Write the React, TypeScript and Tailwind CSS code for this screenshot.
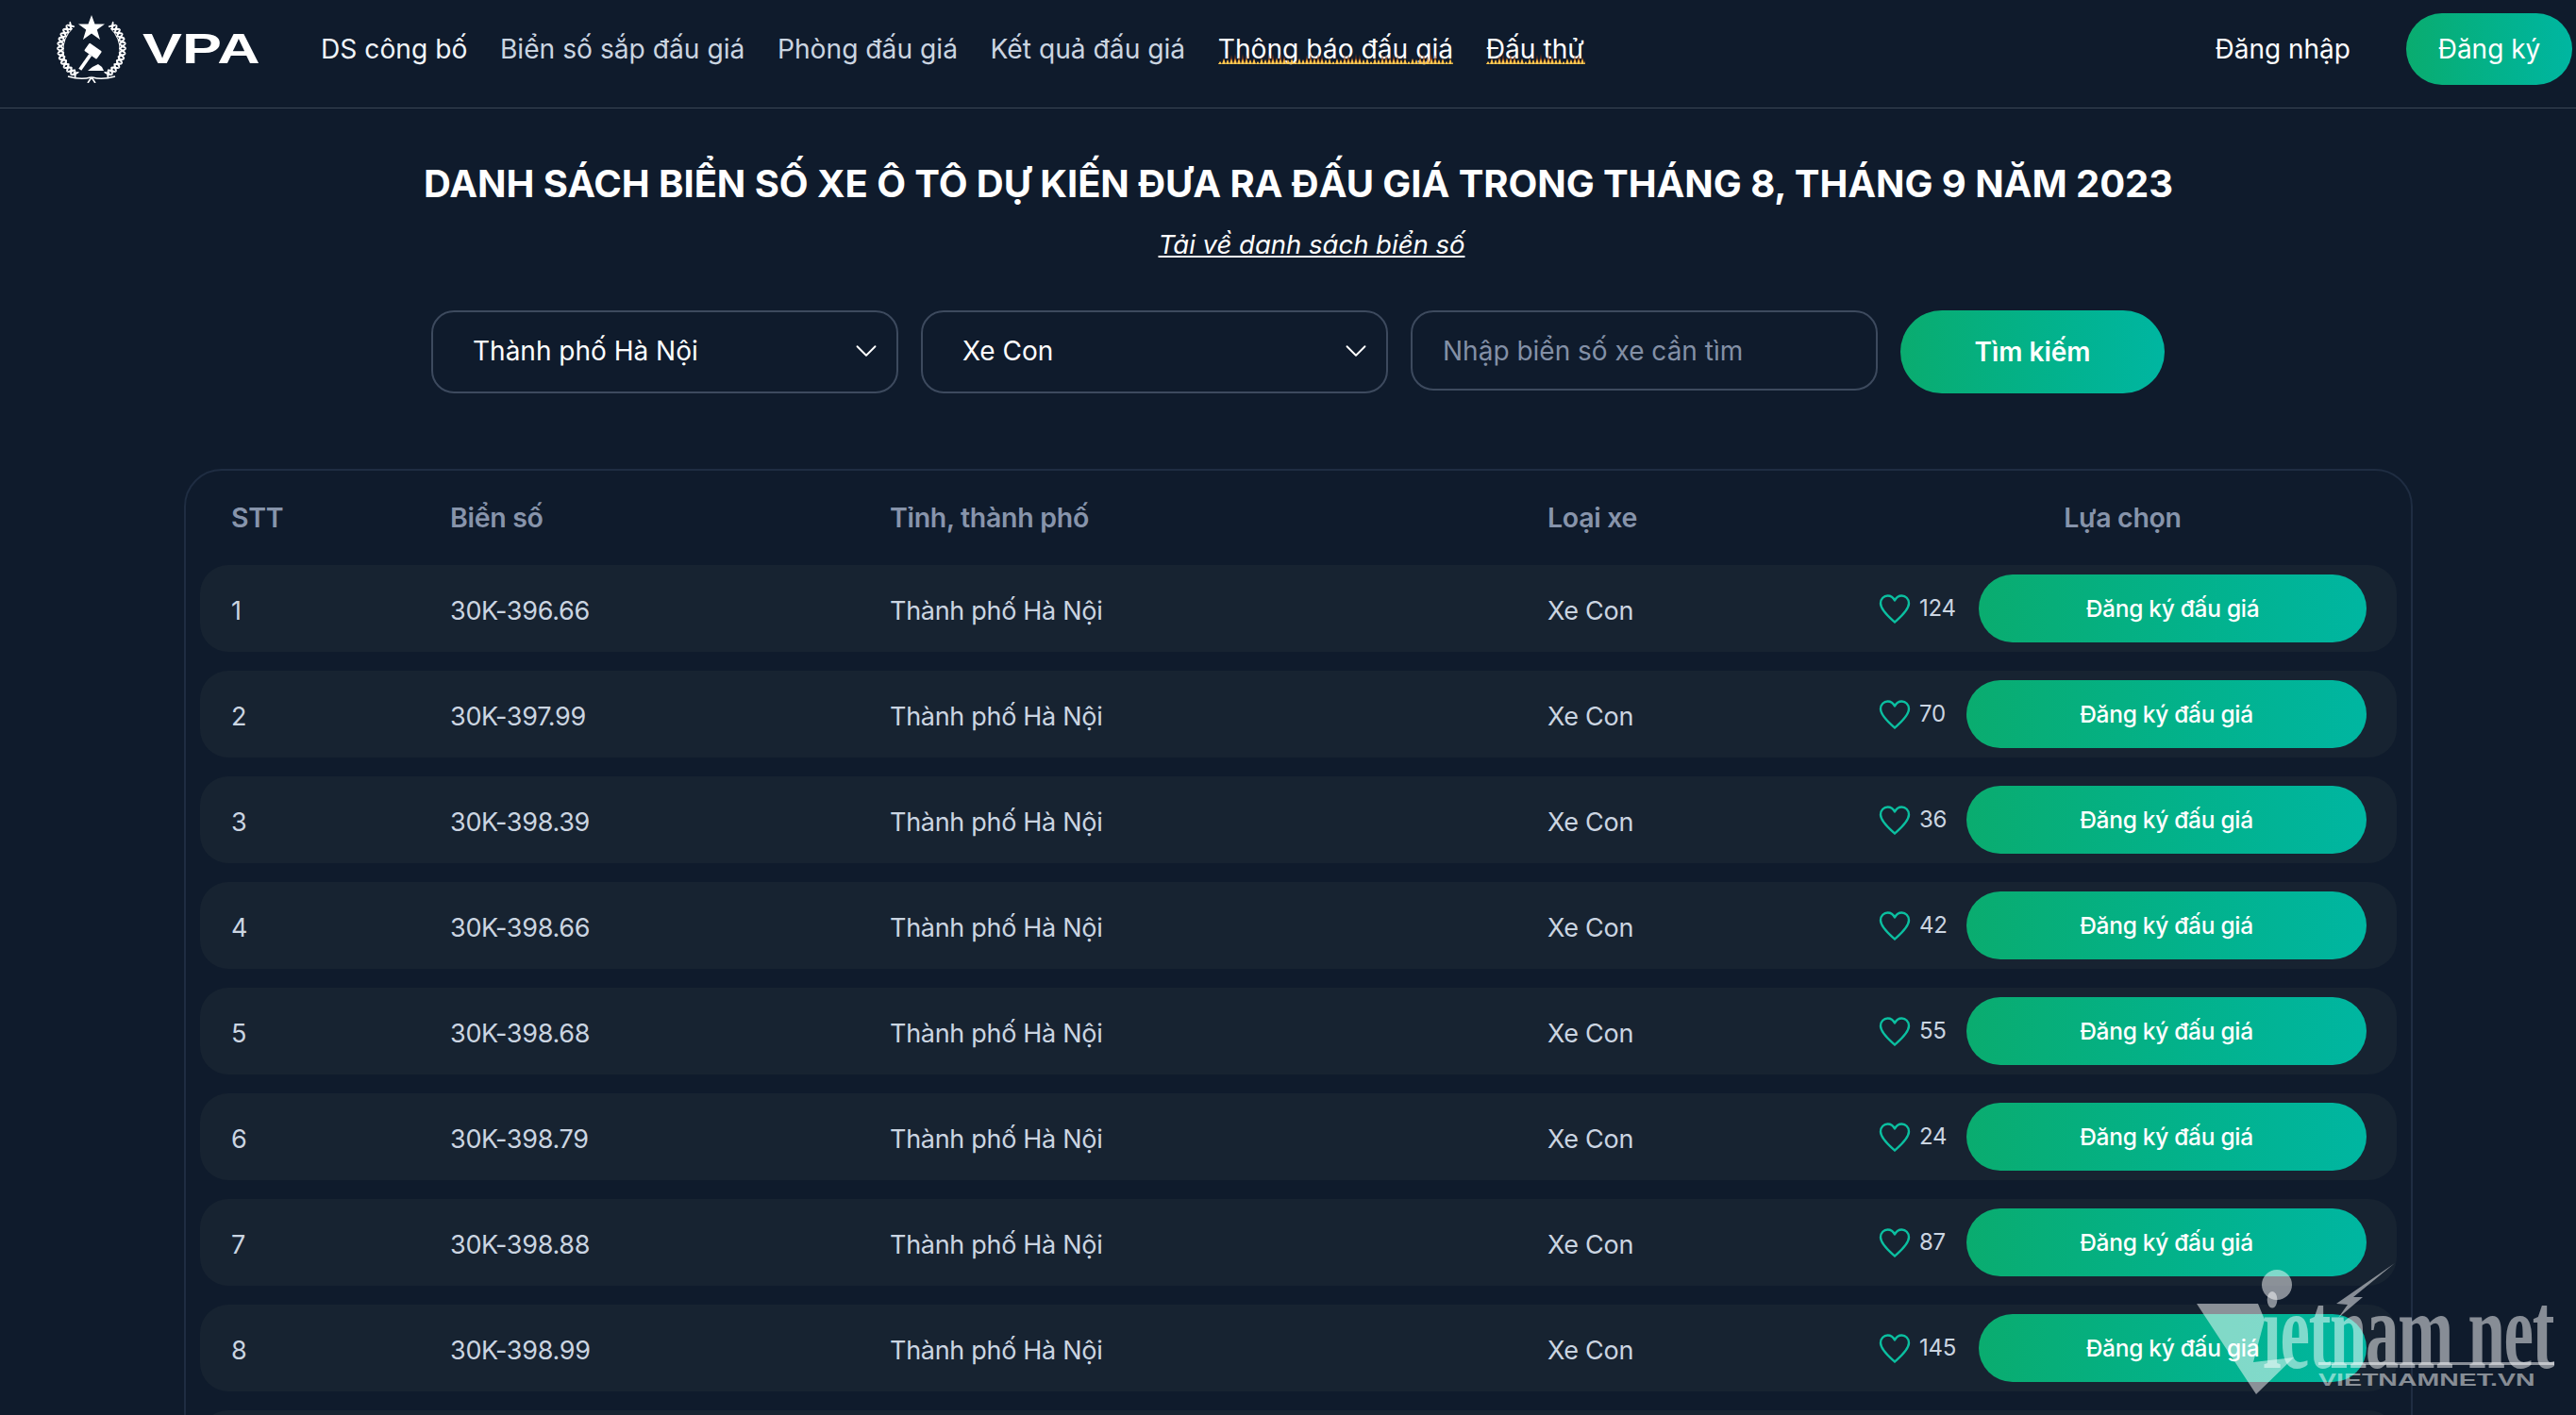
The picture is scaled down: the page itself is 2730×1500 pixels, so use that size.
import React from 'react';
import { ChevronDown } from 'lucide-react';

const rows = [
  { id: 1, plate: '30K-396.66', likes: 124 },
  { id: 2, plate: '30K-397.99', likes: 70 },
  { id: 3, plate: '30K-398.39', likes: 36 },
  { id: 4, plate: '30K-398.66', likes: 42 },
  { id: 5, plate: '30K-398.68', likes: 55 },
  { id: 6, plate: '30K-398.79', likes: 24 },
  { id: 7, plate: '30K-398.88', likes: 87 },
  { id: 8, plate: '30K-398.99', likes: 145 },
];

const leafNodes = [0, 1, 2, 3, 4, 5, 6, 7, 8, 9, 10, 11, 12];

function Emblem() {
  return (
    <svg width="74" height="72" viewBox="0 0 74 72" fill="white">
      <polygon points="37,0 40.5,9.5 51,9.5 42.8,15.5 46,26 37,19.5 28,26 31.2,15.5 23,9.5 33.5,9.5" />
      {/* laurel */}
      <path d="M20 62 A34 32 0 0 1 17 14 M54 62 A34 32 0 0 0 57 14" stroke="white" strokeWidth="1" fill="none" />
      {leafNodes.map((i) => {
        const t = 122 + i * 8.8;
        const a = (t * Math.PI) / 180;
        const x = 37 + 33 * Math.cos(a);
        const y = 35 + 32 * Math.sin(a);
        return (
          <g key={i}>
            <ellipse cx={x} cy={y} rx="1.1" ry="4.6" transform={`rotate(${t + 55} ${x} ${y})`} />
            <ellipse cx={x} cy={y} rx="1.1" ry="4.6" transform={`rotate(${t + 125} ${x} ${y})`} />
            <ellipse cx={74 - x} cy={y} rx="1.1" ry="4.6" transform={`rotate(${-t - 55} ${74 - x} ${y})`} />
            <ellipse cx={74 - x} cy={y} rx="1.1" ry="4.6" transform={`rotate(${-t - 125} ${74 - x} ${y})`} />
          </g>
        );
      })}
      {/* gavel */}
      <g transform="rotate(35 38 39)">
        <rect x="30" y="33" width="16" height="10" rx="1" />
        <rect x="36.2" y="43" width="3.6" height="19" />
      </g>
      <polygon points="33,59 50,59 48,55 44,52 38,55" />
      {/* ribbon */}
      <path d="M12 65 Q26 69 36 66 M62 65 Q48 69 38 66 M33 72 L37 66 L41 72" stroke="white" strokeWidth="1.6" fill="none" />
    </svg>
  );
}

function Flames({ width }: { width: number }) {
  const tall: string[] = [];
  const low: string[] = [];
  let x = 0;
  let i = 0;
  while (x < width) {
    const w = 4 + ((i * 7) % 7);
    const h = 3 + ((i * i * 3) % 10);
    tall.push(`L${x + w / 2} ${14 - h} L${x + w} 14`);
    low.push(`L${x + w / 2} ${14 - Math.min(h, 6)} L${x + w} 14`);
    x += w;
    i++;
  }
  const id = `flame-${width}`;
  return (
    <svg className="absolute left-0 bottom-[5px]" width={width} height="14" viewBox={`0 0 ${width} 14`}>
      <defs>
        <linearGradient id={id} x1="0" y1="0" x2="0" y2="1">
          <stop offset="0" stopColor="#ffab2e" />
          <stop offset="1" stopColor="#ffd25a" />
        </linearGradient>
      </defs>
      <path d={`M0 14 ${tall.join(' ')} Z`} fill="#8a3a16" fillOpacity="0.75" />
      <path d={`M0 14 ${low.join(' ')} Z`} fill={`url(#${id})`} />
    </svg>
  );
}

function Heart() {
  return (
    <svg width="34" height="31" viewBox="0 0 34 31" fill="none" stroke="#0bbfa0" strokeWidth="2.4" strokeLinejoin="round">
      <path d="M17 29.5 C12 25 2 17 2 9.5 C2 4.8 5.5 1.5 9.5 1.5 C12.8 1.5 15.5 3.5 17 6.5 C18.5 3.5 21.2 1.5 24.5 1.5 C28.5 1.5 32 4.8 32 9.5 C32 17 22 25 17 29.5 Z" />
    </svg>
  );
}

function Select({ value }: { value: string }) {
  return (
    <div className="w-[495px] h-[88px] rounded-[24px] border-2 border-[#3d4a5e] flex items-center justify-between pl-[42px] pr-[13px] pb-[2px] text-[28px] text-white">
      <span>{value}</span>
      <ChevronDown size={38} strokeWidth={1.2} />
    </div>
  );
}

function NavLink({ label, tone, flame }: { label: string; tone: string; flame?: number }) {
  return (
    <a className={`relative whitespace-nowrap ${tone}`}>
      {label}
      {flame && <Flames width={flame} />}
    </a>
  );
}

export default function App() {
  return (
    <div className="relative h-[1500px] w-full overflow-hidden bg-[#0f1b2c] font-['Inter',sans-serif]">
      {/* Header */}
      <header className="h-[115px] border-b border-[#3a4555] flex items-center justify-between pl-[60px] pr-[4px] pb-[10px]">
        <div className="flex items-center">
          <div className="flex items-center gap-[17px] w-[213px]">
            <Emblem />
            <span className="text-[44px] leading-none font-bold text-white origin-left scale-x-[1.43] font-['Liberation_Sans',sans-serif]">VPA</span>
          </div>
          <nav className="ml-[67px] flex items-center gap-[34.5px] text-[28.2px]">
            <NavLink label="DS công bố" tone="text-[#f1f5f9]" />
            <NavLink label="Biển số sắp đấu giá" tone="text-[#cbd5e1]" />
            <NavLink label="Phòng đấu giá" tone="text-[#cbd5e1]" />
            <NavLink label="Kết quả đấu giá" tone="text-[#cbd5e1]" />
            <NavLink label="Thông báo đấu giá" tone="text-white" flame={249} />
            <NavLink label="Đấu thử" tone="text-white" flame={105} />
          </nav>
        </div>
        <div className="flex items-center gap-[59px] text-[28px] text-white">
          <a>Đăng nhập</a>
          <button className="w-[176px] h-[76px] rounded-full bg-gradient-to-r from-[#0aac6f] to-[#00b6a1] text-white">Đăng ký</button>
        </div>
      </header>

      {/* Main */}
      <main className="ml-[195px] w-[2362px] pt-[50px]">
        <h1 className="text-center text-[40px] tracking-[-0.06px] leading-[60px] font-bold text-white whitespace-nowrap">
          DANH SÁCH BIỂN SỐ XE Ô TÔ DỰ KIẾN ĐƯA RA ĐẤU GIÁ TRONG THÁNG 8, THÁNG 9 NĂM 2023
        </h1>
        <p className="mt-[14px] pl-[28px] text-center text-[27.5px] leading-[40px] italic underline text-white">Tải về danh sách biển số</p>

        <div className="mt-[50px] flex items-start justify-center gap-[24px] pr-[1px]">
          <Select value="Thành phố Hà Nội" />
          <Select value="Xe Con" />
          <input
            placeholder="Nhập biển số xe cần tìm"
            className="w-[495px] h-[85px] rounded-[24px] border-2 border-[#3d4a5e] bg-transparent pl-[32px] text-[28px] text-white placeholder:text-[#8390a6] outline-none"
          />
          <button className="w-[280px] h-[88px] rounded-full bg-gradient-to-r from-[#0aac6f] to-[#00b6a1] text-[28px] font-semibold text-white">Tìm kiếm</button>
        </div>

        {/* Table */}
        <section className="mt-[80px] rounded-[40px] border-2 border-[#1f2d42] px-[15px] text-[27px] tracking-[-0.3px]">
          <div className="grid grid-cols-[232px_466px_697px_1fr_auto] items-center h-[100px] pl-[33px] pr-[32px] text-[28.5px] font-semibold text-[#8794ab]">
            <div>STT</div>
            <div>Biển số</div>
            <div>Tỉnh, thành phố</div>
            <div>Loại xe</div>
            <div className="w-[517px] text-center">Lựa chọn</div>
          </div>
          <div className="flex flex-col gap-[20px]">
            {rows.map((r) => (
              <div key={r.id} className="grid grid-cols-[232px_466px_697px_1fr_auto] items-center h-[92px] rounded-[30px] bg-[#172331] pl-[33px] pr-[32px] text-[#cbd5e1]">
                <div className="pt-[7px]">{r.id}</div>
                <div className="pt-[7px]">{r.plate}</div>
                <div className="pt-[7px]">Thành phố Hà Nội</div>
                <div className="pt-[7px]">Xe Con</div>
                <div className="w-[517px] flex items-center">
                  <Heart />
                  <span className={`ml-[9px] mr-[24px] text-[24px] ${r.likes > 99 ? 'w-[39px]' : 'w-[26px]'}`}>{r.likes}</span>
                  <button className="flex-1 h-[72px] rounded-full bg-gradient-to-r from-[#0aac6f] to-[#00b6a1] text-[24.5px] font-medium text-white">Đăng ký đấu giá</button>
                </div>
              </div>
            ))}
            <div className="h-[92px] rounded-[30px] bg-[#172331]" />
          </div>
        </section>
      </main>

      {/* Watermark */}
      <div className="absolute left-[2328px] top-[1339px] w-[384px] h-[140px] pointer-events-none">
        <svg className="absolute inset-0" width="384" height="140" viewBox="0 0 384 140" fill="#ffffff" fillOpacity="0.5">
          <polygon points="0,43 65,43 72,60 60,105 103,100 63,139" />
          <circle cx="85" cy="23" r="16" />
          <polygon points="210,0 148,43 160,44 150,58 176,36 166,36" />
        </svg>
        <span className="absolute left-[70px] top-[22px] text-[116px] leading-[100px] tracking-[-2px] font-bold text-white/50 whitespace-nowrap origin-left scale-x-[0.61] font-['Liberation_Serif',serif]">ietnam net</span>
        <div className="absolute left-[129px] top-[105px] w-[250px] h-[3px] bg-white/50" />
        <span className="absolute left-[129px] top-[114px] text-[19px] leading-[19px] font-bold text-white/50 whitespace-nowrap origin-left scale-x-[1.5] font-['Liberation_Sans',sans-serif]">VIETNAMNET.VN</span>
      </div>
    </div>
  );
}
